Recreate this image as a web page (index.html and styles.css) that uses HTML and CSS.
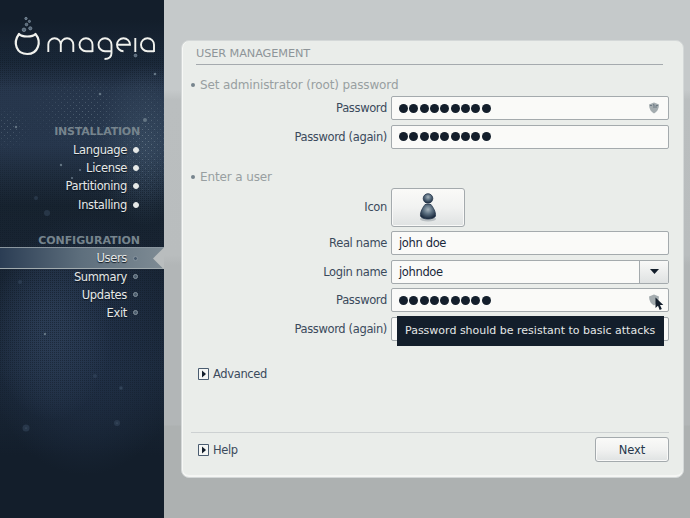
FILE: index.html
```html
<!DOCTYPE html>
<html lang="en">
<head>
<meta charset="utf-8">
<title>Mageia installer</title>
<link rel="stylesheet" href="styles.css">
</head>
<body>
<div class="screen">
  <aside class="sidebar">
    <svg class="sky" width="164" height="518" viewBox="0 0 164 518" aria-hidden="true">
      <defs>
        <pattern id="grain" width="4" height="4" patternUnits="userSpaceOnUse"><path d="M0 0h1v1H0zM2 2h1v1H2zM2 0h1v1H2zM0 2h1v1H0z" fill="#131e2b"/></pattern>
        <pattern id="dust" width="6" height="6" patternUnits="userSpaceOnUse"><path d="M1 0h1v1H1zM4 3h1v1H4z" fill="#647584"/></pattern>
        <radialGradient id="fade"><stop offset="0" stop-color="#fff"/><stop offset="1" stop-color="#000"/></radialGradient>
        <linearGradient id="band" x2="0" y2="1"><stop offset="0" stop-color="#000"/><stop offset=".08" stop-color="#fff"/><stop offset=".16" stop-color="#222"/><stop offset=".3" stop-color="#333"/><stop offset=".42" stop-color="#fff"/><stop offset=".85" stop-color="#aaa"/><stop offset="1" stop-color="#000"/></linearGradient>
        <mask id="grainmask"><rect y="30" width="164" height="420" fill="url(#band)"/></mask>
        <mask id="dustmask"><ellipse cx="145" cy="140" rx="28" ry="65" fill="url(#fade)"/><ellipse cx="85" cy="112" rx="60" ry="38" fill="url(#fade)" opacity=".7"/><ellipse cx="8" cy="128" rx="25" ry="24" fill="url(#fade)" opacity=".7"/></mask>
      </defs>
      <rect y="30" width="164" height="420" fill="url(#grain)" mask="url(#grainmask)" opacity=".8"/>
      <rect width="164" height="240" fill="url(#dust)" mask="url(#dustmask)"/>
      <g fill="#647584"><circle cx="155" cy="74" r="1.3"/><circle cx="100" cy="94" r="1.3"/><circle cx="145" cy="120" r="2"/><circle cx="16" cy="127" r="1.2"/><circle cx="61" cy="165" r="1.2"/><circle cx="72" cy="178" r="1"/><circle cx="45" cy="334" r="1.2"/><circle cx="80" cy="170" r="1"/><circle cx="26" cy="428" r=".6"/><circle cx="117" cy="423" r=".6"/><circle cx="121" cy="388" r=".6"/></g>
      <g fill="#3d5067" opacity=".45"><circle cx="36" cy="198" r="2"/><circle cx="47" cy="213" r="3"/><circle cx="26" cy="428" r="3.500"/><circle cx="117" cy="423" r="3"/><circle cx="121" cy="388" r="2"/><circle cx="95" cy="376" r="2"/><circle cx="20" cy="282" r="2"/></g>
    </svg>
    <svg class="logo" width="164" height="66" viewBox="0 0 164 66" role="img" aria-label="Mageia logo">
      <path d="M19 34C22 37.300 32.500 37.300 35.500 34C42 42 38 54 27.300 54C16.500 54 12.500 43 19 34Z" fill="none" stroke="#f1f2ee" stroke-width="2.200" stroke-linejoin="round"/>
      <g fill="#56687a" stroke="#8796a4" stroke-width=".7"><circle cx="24" cy="29.800" r="1.800"/><circle cx="30.300" cy="28.300" r="1.600"/><circle cx="26.500" cy="24.500" r="1.300"/><circle cx="29.400" cy="21.400" r="1.100"/><circle cx="26" cy="18.500" r="1.200"/></g>
      <g fill="none" stroke="#f1f2ee" stroke-width="1.900">
        <path d="M48.300 52V44.500A6.250 6.250 0 0 1 60.800 44.500V52M60.800 44.500A6.250 6.250 0 0 1 73.300 44.500V52"/>
        <path d="M92.500 52V44.700A6.500 6.500 0 1 0 86 51.200H92.500"/>
        <path d="M105 51.200A6.500 6.500 0 1 1 111.500 44.700V53Q111.500 59 104.500 59M105 51.200H111"/>
        <path d="M117 44.700H130A6.500 6.500 0 1 0 123.500 51.200"/>
        <path d="M135.300 38V52M154 52V44.700A6.500 6.500 0 1 0 147.500 51.200H154"/>
      </g>
      <circle cx="135.500" cy="55.500" r="1.400" fill="#56687a" stroke="#8796a4" stroke-width=".6"/>
    </svg>
    <nav class="steps">
      <h2>INSTALLATION</h2>
      <ul>
        <li class="done">Language</li>
        <li class="done">License</li>
        <li class="done">Partitioning</li>
        <li class="done">Installing</li>
      </ul>
      <h2 class="second">CONFIGURATION</h2>
      <ul>
        <li class="active">Users</li>
        <li>Summary</li>
        <li>Updates</li>
        <li>Exit</li>
      </ul>
    </nav>
  </aside>
  <main class="stage">
    <section class="panel">
      <h1><span>USER MANAGEMENT</span></h1>
      <h3><i></i><span>Set administrator (root) password</span></h3>
      <div class="form">
        <label>Password</label>
        <div class="field"><b class="dots"><i></i><i></i><i></i><i></i><i></i><i></i><i></i><i></i><i></i></b>
          <svg class="shield" width="12" height="12" viewBox="0 0 12 12"><path d="M1 2.500L6 .5L11 2.500C11 7 9 10 6 11.500C3 10 1 7 1 2.500Z" fill="#a4acaf"/><path d="M2 3.500H4M5 3L6 2.500V6M8 6V3.500H10" stroke="#5f6d78" stroke-width=".8" fill="none"/></svg>
        </div>
        <label>Password (again)</label>
        <div class="field"><b class="dots"><i></i><i></i><i></i><i></i><i></i><i></i><i></i><i></i><i></i></b></div>
      </div>
      <h3 class="user"><i></i><span>Enter a user</span></h3>
      <div class="form user-form">
        <label>Icon</label>
        <button class="avatar" aria-label="Icon">
          <svg width="20" height="30" viewBox="0 0 20 30"><defs><radialGradient id="ball" cx=".5" cy=".35" r=".65"><stop offset="0" stop-color="#a6b3bc"/><stop offset=".45" stop-color="#5d7182"/><stop offset="1" stop-color="#17263a"/></radialGradient></defs><ellipse cx="10" cy="27" rx="8" ry="2.500" fill="#9da5aa" opacity=".6"/><path d="M7 12.500H13C15 15.500 18 19.500 17.500 24C16 28 4 28 2.500 24C2 19.500 5 15.500 7 12.500Z" fill="url(#ball)" stroke="#26374d" stroke-width=".8"/><circle cx="10" cy="6.500" r="4.800" fill="url(#ball)" stroke="#26374d" stroke-width=".8"/></svg>
        </button>
        <label>Real name</label>
        <div class="field">john doe</div>
        <label>Login name</label>
        <div class="field">johndoe<span class="drop"><svg width="9" height="5" viewBox="0 0 9 5"><path d="M0 0H9L4.500 5Z" fill="#131e2b"/></svg></span></div>
        <label>Password</label>
        <div class="field"><b class="dots"><i></i><i></i><i></i><i></i><i></i><i></i><i></i><i></i><i></i></b>
          <svg class="shield" width="12" height="12" viewBox="0 0 12 12"><path d="M1 2.500L6 .5L11 2.500C11 7 9 10 6 11.500C3 10 1 7 1 2.500Z" fill="#a4acaf"/></svg>
          <svg class="cursor" width="9" height="14" viewBox="0 0 9 14"><path d="M.5 .5V11L3 8.800L4.700 13L6.800 12L5 8H8.300Z" fill="#131e2b"/></svg>
        </div>
        <label>Password (again)</label>
        <div class="field"><div class="tooltip">Password should be resistant to basic attacks</div></div>
      </div>
      <div class="expander advanced"><svg width="11" height="12" viewBox="0 0 11 12"><path d="M.5 .5H10.500V11.500H.5Z" fill="#f5f6f4" stroke="#4a5c70"/><path d="M4 2.500L8 6L4 9.500Z" fill="#131e2b"/></svg><span>Advanced</span></div>
      <footer>
        <div class="expander"><svg width="11" height="12" viewBox="0 0 11 12"><path d="M.5 .5H10.500V11.500H.5Z" fill="#f5f6f4" stroke="#4a5c70"/><path d="M4 2.500L8 6L4 9.500Z" fill="#131e2b"/></svg><span>Help</span></div>
        <button class="next">Next</button>
      </footer>
    </section>
  </main>
</div>
</body>
</html>
```
FILE: styles.css
```css
*, ::before, ::after { box-sizing: border-box; }
body { margin: 0; font-family: "DejaVu Sans", sans-serif; font-size: 11.5px; letter-spacing: -0.35px; color: #27364b; overflow: hidden; }
h1, h2, h3, ul { margin: 0; padding: 0; font-weight: normal; }
ul { list-style: none; }
.screen { display: flex; width: 690px; height: 518px; }

.sidebar {
  position: relative; flex: 0 0 164px; height: 518px; overflow: hidden;
  background:
    radial-gradient(ellipse 60px 90px at 52px 330px, #2a3b53 20%, transparent),
    radial-gradient(ellipse 100px 130px at 85px 345px, #22324a, transparent),
    radial-gradient(ellipse 50px 80px at 145px 145px, #36495f, transparent),
    linear-gradient(#131e2b 20px, #1a2839 62px, #27374d 88px, #27374d 145px, #17232f 205px, #182433 250px, #1b293b 370px, #131e2b 455px);
}
.sky { position: absolute; inset: 0; }
.logo { position: relative; display: block; }
.steps { position: relative; padding-top: 57px; text-align: right; color: #e6e9e8; }
.steps h2 { height: 18px; line-height: 18px; padding-right: 24px; font-size: 11px; letter-spacing: -0.2px; font-weight: bold; color: #76848d; }
.steps .second { margin-top: 18.200px; height: 15.500px; line-height: 17px; letter-spacing: -0.050px; }
.steps li { position: relative; display: flex; justify-content: flex-end; align-items: center; height: 18.200px; padding-right: 26px; gap: 6px; text-shadow: 0 1px 1px #0d1621; }
.steps li::after { content: ""; width: 5px; height: 5px; border-radius: 50%; background: #4a5c6e; border: 1px solid #87949e; }
.steps li.done::after { width: 6px; height: 6px; margin-right: -1px; background: #e6e9e8; border-color: #e6e9e8; }
.steps li.active {
  height: 22px; margin-bottom: -2px;
  background: linear-gradient(90deg, #2b3d54, #5e6f7d 50%, #7e8b94);
  border-top: 1px solid #8a969f; border-bottom: 1px solid #a2abae;
}
.steps li.active::before { content: ""; position: absolute; right: 0; top: -1px; width: 11px; height: 22px; background: #b9bdbe; clip-path: polygon(100% 0, 0 50%, 100% 100%); }

.stage { flex: 1; padding: 40px 5px 0 17px; background: linear-gradient(#c5c9ca 90px, #babebf 100px, #b9bdbe 255px, #b2b6b7 265px, #b2b6b7 425px, #adb1b1 426px); }
.panel { width: 503px; height: 438px; padding: 4px 14px 0 9px; background: #eaedea; border: 1px solid #d4d8d8; border-radius: 8px; box-shadow: inset 1px 0 #f7f8f6, inset 0 -2px #f5f6f4; }
h1 { margin-left: 5px; width: 467px; height: 20px; line-height: 18px; border-bottom: 1px solid #a5aaae; font-size: 11.300px; letter-spacing: -0.100px; color: #8e9599; }
h3 { display: flex; align-items: center; height: 18px; margin-top: 11px; gap: 5px; font-size: 12px; letter-spacing: -0.130px; color: #989fa1; }
h3 i { width: 4px; height: 4px; border-radius: 50%; background: #76848d; }
h3.user { margin-top: 19px; }
.form { display: grid; grid-template-columns: 196px 278px; column-gap: 4px; grid-auto-rows: 24px; row-gap: 4.500px; align-items: center; margin-top: 2px; }
.user-form { grid-template-rows: 39px; }
label { text-align: right; color: #3b4a5c; }
.field { position: relative; display: flex; align-items: center; height: 24px; padding-left: 7px; background: #fafaf8; border: 1px solid #a4aaad; border-radius: 2px; color: #18273a; }
.dots { display: flex; gap: 1.350px; }
.dots i { width: 9px; height: 9px; border-radius: 50%; background: #131e2b; }
.shield { margin-left: auto; margin-right: 8px; }
.cursor { position: absolute; left: 263px; top: 8px; z-index: 4; }
.drop { margin-left: auto; width: 29px; height: 22px; border-left: 1px solid #a4aaad; background: linear-gradient(#f9f9f8, #dfe2e2); display: flex; align-items: center; justify-content: center; }
button { padding: 0; font: inherit; letter-spacing: inherit; color: #27364b; border: 1px solid #a4aaad; border-radius: 3px; background: linear-gradient(#fafaf8, #f1f2f1 50%, #dfe2e2); box-shadow: inset 0 0 0 1px #f9f9f8; }
.avatar { display: flex; align-items: center; justify-content: center; width: 74px; height: 39px; }
.tooltip { position: absolute; left: 5px; top: -2px; z-index: 3; width: 267px; height: 30px; line-height: 30px; padding-left: 8px; white-space: nowrap; font-size: 11px; letter-spacing: 0; background: #131e2b; color: #e4e7e7; }
.expander { display: flex; align-items: center; gap: 4px; height: 18px; color: #3b4a5c; }
.advanced { margin: 24px 0 0 7px; }
footer { display: flex; justify-content: space-between; align-items: center; margin-top: 49px; padding: 2px 0 0 7px; height: 33px; border-top: 1px solid #cdd1d2; }
.next { width: 74px; height: 25px; letter-spacing: -0.1px; }
```
